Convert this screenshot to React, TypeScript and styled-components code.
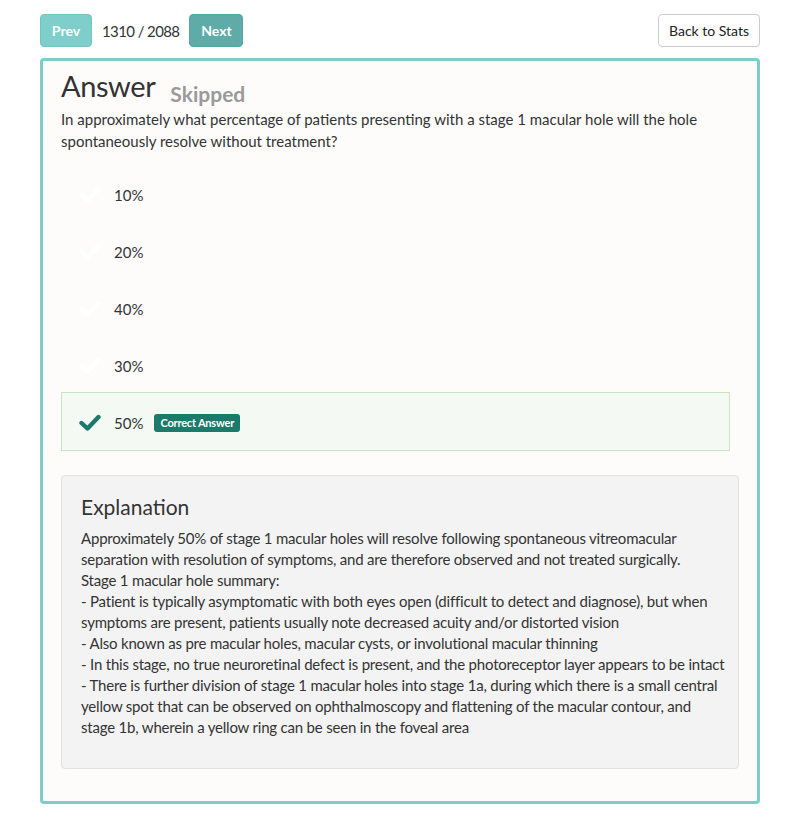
import React from "react";
import styled, { createGlobalStyle } from "styled-components";

const Global = createGlobalStyle`
  html, body { margin: 0; padding: 0; background: #ffffff; }
  body { font-family: Lato, "Open Sans", sans-serif; color: #333333; }
  * { box-sizing: border-box; }
`;

const Page = styled.div`
  padding: 14px 40px 20px 40px;
  width: 800px;
`;

const Toolbar = styled.div`
  display: flex;
  align-items: center;
  height: 33px;
  margin-bottom: 11px;
`;

const NavButton = styled.button<{ $dark?: boolean }>`
  height: 33px;
  width: ${(p) => (p.$dark ? "54px" : "52px")};
  padding: 0;
  border: 1px solid ${(p) => (p.$dark ? "#55a6a2" : "#72c4c0")};
  border-radius: 4px;
  background: ${(p) => (p.$dark ? "#5fabA7" : "#7ecfcb")};
  color: #ffffff;
  font-family: Lato, sans-serif;
  font-weight: 700;
  font-size: 14px;
`;

const Counter = styled.span`
  margin: 0 10px;
  font-size: 15px;
  letter-spacing: -0.6px;
  color: #333;
`;

const Spacer = styled.div`
  flex: 1;
`;

const BackButton = styled.button`
  height: 33px;
  width: 102px;
  border: 1px solid #cccccc;
  border-radius: 4px;
  background: #ffffff;
  color: #222;
  font-family: Lato, sans-serif;
  font-size: 14px;
`;

const Card = styled.div`
  border: 3px solid #7dcdc9;
  border-radius: 4px;
  background: #fdfcfb;
  padding: 8px 18px 32px 18px;
`;

const TitleRow = styled.div`
  display: flex;
  align-items: baseline;
`;

const Title = styled.h1`
  margin: 0;
  font-size: 29px;
  font-weight: 400;
  letter-spacing: -0.4px;
  line-height: 33px;
  color: #333;
`;

const Status = styled.span`
  margin-left: 15px;
  font-size: 21px;
  font-weight: 700;
  color: #9a9a9a;
  position: relative;
  top: 5px;
`;

const Question = styled.p`
  margin: 6px 0 0 0;
  font-size: 15px;
  line-height: 22px;
  color: #333;
`;

const Line = styled.span`
  display: block;
  white-space: nowrap;
`;

const Options = styled.div`
  margin: 14px 9px 0 0;
  display: flex;
  flex-direction: column;
`;

const Option = styled.div<{ $correct?: boolean }>`
  display: flex;
  align-items: center;
  height: ${(p) => (p.$correct ? "59px" : "57px")};
  margin-top: ${(p) => (p.$correct ? "-2px" : "0")};
  padding: ${(p) => (p.$correct ? "2px" : "0")} 17px 0 17px;
  border: 1px solid ${(p) => (p.$correct ? "#c8e5c0" : "transparent")};
  background: ${(p) => (p.$correct ? "#f4faf3" : "transparent")};
`;

const CheckBox = styled.span<{ $visible?: boolean }>`
  width: 22px;
  height: 20px;
  margin-right: 13px;
  color: ${(p) => (p.$visible ? "#1b7a69" : "#ffffff")};
  display: flex;
  align-items: center;
`;

const OptionText = styled.span`
  font-size: 15px;
  color: #333;
`;

const Badge = styled.span`
  margin-left: 11px;
  height: 18px;
  display: inline-flex;
  align-items: center;
  padding: 0 6px;
  border-radius: 3px;
  background: #1b7a69;
  color: #fff;
  font-size: 11px;
  font-weight: 700;
  letter-spacing: -0.2px;
`;

const Explanation = styled.div`
  margin-top: 24px;
  background: #f3f3f3;
  border: 1px solid #e1e1e1;
  border-radius: 4px;
  padding: 16px 19px 30px 19px;
`;

const ExpTitle = styled.h2`
  margin: 0 0 6px 0;
  font-size: 21px;
  font-weight: 400;
  line-height: 30px;
  color: #333;
`;

const ExpBody = styled.div`
  font-size: 15px;
  line-height: 21px;
  letter-spacing: -0.2px;
  color: #333;
`;

const Check = () => (
  <svg width="22" height="18" viewBox="0 0 22 18">
    <polyline
      points="2.5,9 8.5,14.5 19.5,3"
      fill="none"
      stroke="currentColor"
      strokeWidth="4.4"
      strokeLinecap="round"
      strokeLinejoin="round"
    />
  </svg>
);

const options = [
  { label: "10%" },
  { label: "20%" },
  { label: "40%" },
  { label: "30%" },
  { label: "50%", correct: true },
];

const questionLines = [
  "In approximately what percentage of patients presenting with a stage 1 macular hole will the hole",
  "spontaneously resolve without treatment?",
];

const explanationLines = [
  "Approximately 50% of stage 1 macular holes will resolve following spontaneous vitreomacular",
  "separation with resolution of symptoms, and are therefore observed and not treated surgically.",
  "Stage 1 macular hole summary:",
  "- Patient is typically asymptomatic with both eyes open (difficult to detect and diagnose), but when",
  "symptoms are present, patients usually note decreased acuity and/or distorted vision",
  "- Also known as pre macular holes, macular cysts, or involutional macular thinning",
  "- In this stage, no true neuroretinal defect is present, and the photoreceptor layer appears to be intact",
  "- There is further division of stage 1 macular holes into stage 1a, during which there is a small central",
  "yellow spot that can be observed on ophthalmoscopy and flattening of the macular contour, and",
  "stage 1b, wherein a yellow ring can be seen in the foveal area",
];

export default function App() {
  return (
    <>
      <Global />
      <Page>
        <Toolbar>
          <NavButton>Prev</NavButton>
          <Counter>1310 / 2088</Counter>
          <NavButton $dark>Next</NavButton>
          <Spacer />
          <BackButton>Back to Stats</BackButton>
        </Toolbar>
        <Card>
          <TitleRow>
            <Title>Answer</Title>
            <Status>Skipped</Status>
          </TitleRow>
          <Question>
            {questionLines.map((l) => (
              <Line key={l}>{l}</Line>
            ))}
          </Question>
          <Options>
            {options.map((o) => (
              <Option key={o.label} $correct={o.correct}>
                <CheckBox $visible={o.correct}>
                  <Check />
                </CheckBox>
                <OptionText>{o.label}</OptionText>
                {o.correct && <Badge>Correct Answer</Badge>}
              </Option>
            ))}
          </Options>
          <Explanation>
            <ExpTitle>Explanation</ExpTitle>
            <ExpBody>
              {explanationLines.map((l) => (
                <Line key={l}>{l}</Line>
              ))}
            </ExpBody>
          </Explanation>
        </Card>
      </Page>
    </>
  );
}
